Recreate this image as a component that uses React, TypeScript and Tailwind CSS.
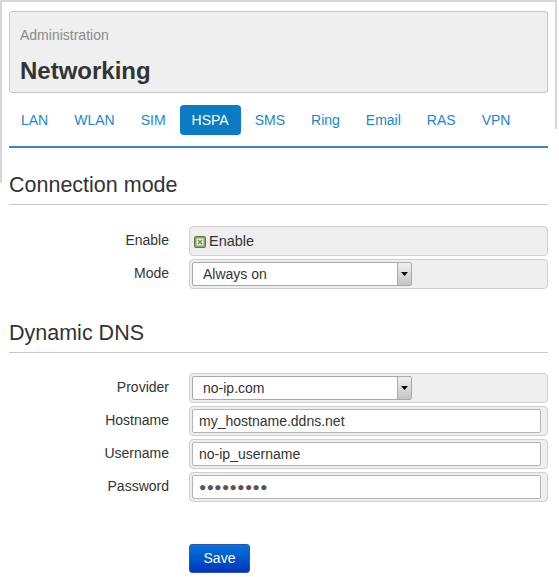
import React from "react";

const font = { fontFamily: '"Liberation Sans", Arial, sans-serif' };

function Row({ label, children }: { label: string; children: React.ReactNode }) {
  return (
    <div className="flex items-center h-[30px]">
      <div className="w-[160px] text-right text-[14px] leading-[20px] text-[#333] -mt-[2px]">{label}</div>
      <div className="ml-[20px] w-[359px] h-[30px] rounded-[4px] border border-[#cfcfcf] bg-[#efefef] flex items-center pl-[2px] pr-[6px]">
        {children}
      </div>
    </div>
  );
}

function Select({ value }: { value: string }) {
  return (
    <div className="flex items-center w-[220px] h-[24px] bg-white border border-[#a9a9a9] rounded-[2px] pl-[10px] text-[14px] text-[#333]">
      <span className="flex-1">{value}</span>
      <div className="w-[14px] h-[22px] border-l border-[#aaa] bg-gradient-to-b from-[#f0f0f0] to-[#c4c4c4] flex items-center justify-center">
        <svg width="7" height="4" viewBox="0 0 7 4">
          <path d="M0 0 L7 0 L3.5 4 Z" fill="#000" />
        </svg>
      </div>
    </div>
  );
}

function TextInput({ value }: { value: string }) {
  return (
    <div className="flex items-center w-full h-[24px] bg-white border border-[#b5b5b5] rounded-[2px] pl-[6px] text-[14px] text-[#333]">
      {value}
    </div>
  );
}

export default function App() {
  const tabs = ["LAN", "WLAN", "SIM", "HSPA", "SMS", "Ring", "Email", "RAS", "VPN"];
  return (
    <div className="w-[559px] h-[577px] bg-white overflow-hidden" style={font}>
      <div className="w-[557px] h-[183px] border-l-2 border-t-2 border-[#d6d6d6]">
        <div className="h-[127px] border-r-2 border-[#d6d6d6] pl-[7px] pr-[6px] pt-[9px]">
          <div className="w-[539px] h-[82px] rounded-[3px] border border-[#c8c8c8] bg-[#efefef] pl-[10px] pt-[13px]">
            <div className="text-[14px] leading-[20px] text-[#8a8a8a]">Administration</div>
            <div className="mt-[11px] text-[24px] leading-[30px] font-bold text-[#333]">Networking</div>
          </div>
          <div className="flex gap-[2px] mt-[12px]">
            {tabs.map((t) =>
              t === "HSPA" ? (
                <div key={t} className="px-[12px] h-[30px] flex items-center rounded-[4px] bg-[#0b7bc3] text-white text-[14px]">
                  {t}
                </div>
              ) : (
                <div key={t} className="px-[12px] h-[30px] flex items-center text-[#1d86d0] text-[14px]">
                  {t}
                </div>
              )
            )}
          </div>
          <div className="mt-[11px] w-[539px] h-[2px] bg-[#3a85c2]" />
          <div className="mt-[23px] w-[539px] pb-[5px] border-b border-[#c8c8c8] text-[21.5px] leading-[28px] text-[#333]">
            Connection mode
          </div>
          <div className="mt-[21px] flex flex-col gap-[3px]">
            <Row label="Enable">
              <div className="flex items-center pl-[2px] pt-[1px]">
                <svg width="12" height="12" viewBox="0 0 12 12">
                  <rect x="0.5" y="0.5" width="11" height="11" rx="1" fill="#83a861" stroke="#5d7f41" />
                  <rect x="2.5" y="2.5" width="7" height="7" fill="#f2f2f2" />
                  <path d="M4 4 L8 8 M8 4 L4 8" stroke="#6f9550" strokeWidth="1.5" />
                </svg>
                <span className="ml-[3px] text-[14.5px] text-[#333]">Enable</span>
              </div>
            </Row>
            <Row label="Mode">
              <Select value="Always on" />
            </Row>
          </div>
          <div className="mt-[30px] w-[539px] pb-[5px] border-b border-[#c8c8c8] text-[21.5px] leading-[28px] text-[#333]">
            Dynamic DNS
          </div>
          <div className="mt-[20px] flex flex-col gap-[3px]">
            <Row label="Provider">
              <Select value="no-ip.com" />
            </Row>
            <Row label="Hostname">
              <TextInput value="my_hostname.ddns.net" />
            </Row>
            <Row label="Username">
              <TextInput value="no-ip_username" />
            </Row>
            <Row label="Password">
              <div className="flex items-center w-full h-[24px] bg-white border border-[#b5b5b5] rounded-[2px] pl-[6px] text-[#555]">
                <span className="text-[12px] tracking-[0.4px]">●●●●●●●●●</span>
              </div>
            </Row>
          </div>
          <div className="mt-[42px] ml-[180px]">
            <div className="w-[61px] h-[29px] rounded-[3px] border border-[#2a55b0] bg-gradient-to-b from-[#0c74d8] to-[#0233c0] text-white text-[14px] flex items-center justify-center">
              Save
            </div>
          </div>
        </div>
      </div>
    </div>
  );
}
